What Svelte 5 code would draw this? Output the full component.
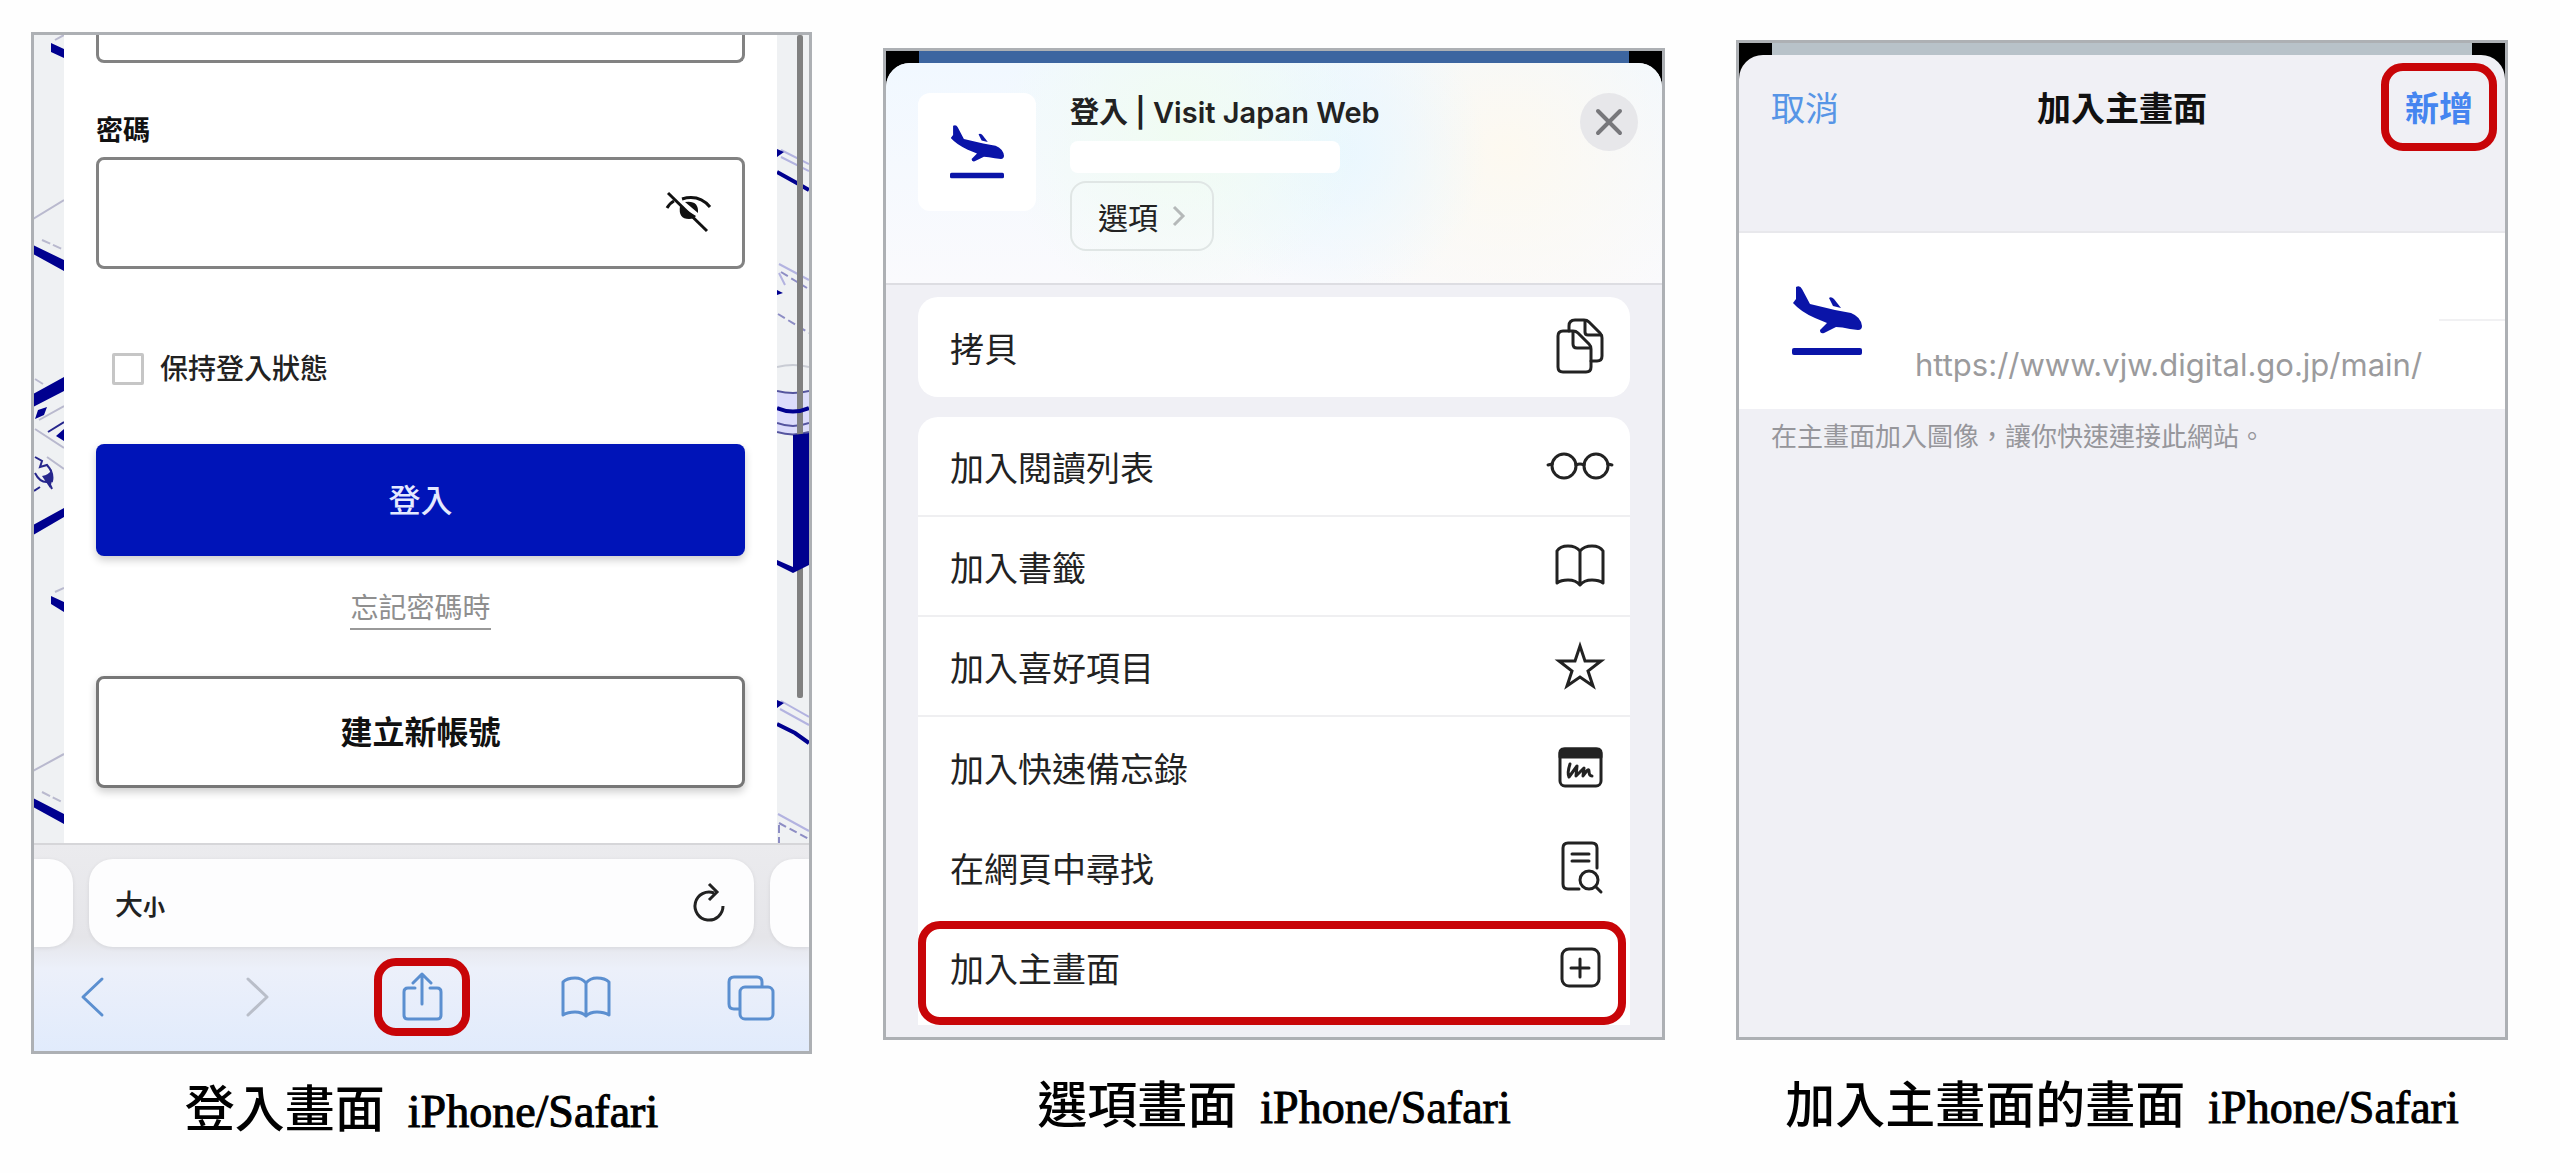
<script>
  let password = $state('');
  let email = $state('');
  let keepLogin = $state(false);

  const actions = [
    { label: '加入閱讀列表', icon: 'glasses', line: true },
    { label: '加入書籤', icon: 'book', line: true },
    { label: '加入喜好項目', icon: 'star', line: true },
    { label: '加入快速備忘錄', icon: 'note' },
    { label: '在網頁中尋找', icon: 'find' },
    { label: '加入主畫面', icon: 'plus', marked: true }
  ];
</script>

{#snippet plane(size)}
  <svg width={size} height={size} viewBox="0 0 70 70" fill="#0a14a8" aria-hidden="true">
    <path d="M4 1 Q8 -1 10 3 L18 18 L43 24 L59 27 Q69 31 70 40 Q70 44 66 44 L58 43 Q50 41 44 41 L32 47 Q28 48 28 44 L35 37 L23 32 Q9 26 1 17 L4 13 Z" />
    <path d="M37 12 Q39 10 42 13 L49 22 L41 20 Z" />
    <rect x="0" y="62" width="70" height="7" rx="2" />
  </svg>
{/snippet}

{#snippet icon(name)}
  <svg class="icon" width="68" height="60" viewBox="0 0 68 60" fill="none" stroke="currentColor" stroke-width="3" stroke-linejoin="round" stroke-linecap="round" aria-hidden="true">
    {#if name === 'copy'}
      <path d="M23 14 V9 Q23 3 29 3 H38 Q41 3 43 5 L54 16 Q56 18 56 21 V39 Q56 44 51 44 H45" />
      <path d="M39 4 V15 Q39 18 42 18 H55" />
      <path d="M17 14 H27 Q30 14 32 16 L43 27 Q45 29 45 32 V50 Q45 55 40 55 H17 Q12 55 12 50 V19 Q12 14 17 14 Z" />
      <path d="M27 15 V27 Q27 31 31 31 H44" />
    {:else if name === 'glasses'}
      <circle cx="18" cy="30" r="12" />
      <circle cx="50" cy="30" r="12" />
      <path d="M30 29 Q34 27 38 29 M2 29 L6 28 M62 28 L66 29" />
    {:else if name === 'book'}
      <path d="M34 15 Q30 10 22 10 Q14 10 11 15 V47 Q15 44 22 44 Q30 44 34 49 Q38 44 46 44 Q53 44 57 47 V15 Q54 10 46 10 Q38 10 34 15 Z M34 15 V48" />
    {:else if name === 'star'}
      <path stroke-linejoin="miter" d="M34 10 L39 25 H55 L42 35 L47 50 L34 41 L21 50 L26 35 L13 25 H29 Z" />
    {:else if name === 'note'}
      <rect x="14" y="12" width="41" height="37" rx="5" />
      <path fill="currentColor" d="M14 20 V16 Q14 12 18 12 H51 Q55 12 55 16 V20 Z" />
      <path d="M24 27 Q21 36 23 40 L31 29 L30 39 L38 31 L37 39 Q43 30 43 34 Q43 39 46 39" />
    {:else if name === 'find'}
      <path d="M33 52 H22 Q17 52 17 47 V11 Q17 6 22 6 H46 Q51 6 51 11 V31" />
      <path d="M26 17 H43 M26 24 H43" />
      <circle cx="43" cy="43" r="9" />
      <path d="M50 50 L55 55" />
    {:else if name === 'plus'}
      <rect x="16" y="12" width="37" height="37" rx="7" />
      <path d="M34 22 V40 M25 31 H43" />
    {/if}
  </svg>
{/snippet}

<main>
  <figure class="login">
    <div class="screen">
      <div class="web">
        <svg class="art" width="30" height="808" viewBox="0 0 30 808" fill="#00008f" aria-hidden="true">
          <path d="M17 8 L30 14 V23 L17 17 Z M-1 210 L30 225 V236 L-1 219 Z M30 342 L-1 359 V372 L30 356 Z" />
          <path d="M22 401 L30 394 V406 Z M1 384 L4 375 L13 372 L10 380 Z M30 473 L-1 490 V500 L30 482 Z" />
          <path d="M17 561 L30 567 V577 L17 569 Z M-1 763 L30 779 V789 L-1 772 Z" />
          <g fill="none" stroke="#b9b9ce" stroke-width="2">
            <path d="M21 5 L30 0 M-1 184 L30 165 M1 344 L9 349 M5 385 L30 371 M1 394 L30 413 M13 422 L30 434 M21 557 L30 553 M-1 736 L30 719" />
            <path stroke-dasharray="9 3" d="M8 205 L28 214 M8 757 L28 767" />
          </g>
          <path fill="none" stroke="#26268c" stroke-width="2" d="M14 397 L30 387 M1 422 L8 426 L6 432 L13 430 Q20 438 18 446 L13 443 L18 454 M1 438 Q6 448 14 447 M0 456 L6 452" />
          <path fill="#26268c" d="M8 441 Q15 440 18 434 V446 L16 453 L12 447 Z" />
        </svg>
        <form class="form" onsubmit={(e) => e.preventDefault()}>
          <input class="field cut" type="email" aria-label="電子郵件" bind:value={email} />
          <label class="label" for="password">密碼</label>
          <div class="password">
            <input class="field" id="password" type="password" bind:value={password} />
            <button class="eye" type="button" aria-label="顯示密碼">
              <svg width="48" height="42" viewBox="0 0 48 42" fill="none" stroke="#111" stroke-width="3">
                <path d="M2 17 Q5 12 9 10 M17 8 Q34 3 45 16" />
                <path fill="#111" stroke="none" d="M15 15 Q13 28 24 28 Q29 28 31 25 Z M20 11 Q34 9 33 22 Z" />
                <path d="M3 2 L42 40" />
              </svg>
            </button>
          </div>
          <label class="keep">
            <input type="checkbox" bind:checked={keepLogin} />
            保持登入狀態
          </label>
          <button class="primary" type="submit">登入</button>
          <a class="forgot" href="#forgot">忘記密碼時</a>
          <button class="secondary" type="button">建立新帳號</button>
        </form>
        <svg class="art" width="32" height="808" viewBox="0 0 32 808" fill="none" aria-hidden="true">
          <path stroke="#b3b3e0" stroke-width="2" d="M4 115 L32 129 M4 122 L32 136 M2 229 L32 245 M2 238 L8 250 M4 666 L32 682 M3 674 L32 690 M1 779 L32 796" />
          <path stroke="#8d8dc4" stroke-width="2" stroke-dasharray="8 4" d="M4 237 L30 253 M1 279 L32 298 M2 788 L32 804 M2 790 V808" />
          <path fill="#00008f" d="M0 114 L7 117 L0 122 Z M0 255 L6 258 L0 260 Z M0 665 L7 668 L0 673 Z" />
          <path stroke="#00008f" stroke-width="4" d="M0 137 L18 147 L32 155 M0 689 L18 698 L32 708" />
          <path stroke="#c9ccd4" stroke-width="2" d="M0 332 Q16 328 32 332" />
          <path fill="#dcdcfb" d="M0 357 Q16 361 32 357 V396 Q16 402 0 396 Z" />
          <path stroke="#55559f" stroke-width="2" d="M0 356 Q16 360 32 356 M0 388 Q16 394 32 388 M0 397 Q16 402 32 397" />
          <rect x="20" y="0" width="6" height="663" rx="2" fill="#808080" />
          <path stroke="#00008f" stroke-width="4" d="M0 373 Q16 380 32 373" />
          <path fill="#00008f" d="M16 400 L32 398 V530 L16 538 L0 530 V525 L16 532 Z" />
        </svg>
      </div>
      <div class="toolbar">
        <div class="tabs">
          <div class="tab stub"></div>
          <div class="tab address">
            <button type="button">大<small>小</small></button>
            <button type="button" aria-label="重新載入">
              <svg width="34" height="42" viewBox="0 0 34 42" fill="none" stroke="#222" stroke-width="3">
                <path d="M31 24 A14 14 0 1 1 22 11 M17 2 L25 10 L17 18" />
              </svg>
            </button>
          </div>
          <div class="tab stub right"></div>
        </div>
        <nav class="nav">
          <button type="button" aria-label="返回"><svg width="52" height="52" viewBox="0 0 52 52"><path d="M36 8 L17 26 L36 44" /></svg></button>
          <button type="button" class="off" aria-label="前進"><svg width="52" height="52" viewBox="0 0 52 52"><path d="M17 8 L36 26 L17 44" /></svg></button>
          <button type="button" class="marked share" aria-label="分享">
            <svg width="52" height="52" viewBox="0 0 52 52"><path d="M19 17 H12 Q8 17 8 21 V44 Q8 48 12 48 H41 Q45 48 45 44 V21 Q45 17 41 17 H34 M26 33 V3 M17 12 L26 3 L35 12" /></svg>
          </button>
          <button type="button" aria-label="書籤"><svg width="52" height="52" viewBox="0 0 52 52"><path d="M26 12 Q22 7 15 7 Q7 7 3 11 V44 Q8 41 15 41 Q22 41 26 45 Q30 41 37 41 Q44 41 49 44 V11 Q45 7 37 7 Q30 7 26 12 Z M26 12 V45" /></svg></button>
          <button type="button" aria-label="分頁"><svg width="52" height="52" viewBox="0 0 52 52"><path d="M14 38 H9 Q4 38 4 33 V11 Q4 6 9 6 H32 Q37 6 37 11 V15" /><rect x="15" y="16" width="33" height="32" rx="5" /></svg></button>
        </nav>
      </div>
    </div>
    <figcaption><span>登入畫面</span>&nbsp; iPhone/Safari</figcaption>
  </figure>

  <figure class="options">
    <div class="screen dark">
      <div class="peek blue"></div>
      <div class="sheet">
        <header class="site">
          <div class="tile">{@render plane(54)}</div>
          <div class="site-info">
            <h2>登入 | Visit Japan Web</h2>
            <div class="blank"></div>
            <button class="pill" type="button">
              選項
              <svg width="14" height="22" viewBox="0 0 14 22" fill="none" stroke="#b5b9b9" stroke-width="3"><path d="M2 2 L11 11 L2 20" /></svg>
            </button>
          </div>
          <button class="close" type="button" aria-label="關閉">
            <svg width="28" height="28" viewBox="0 0 28 28" fill="none" stroke="#77777b" stroke-width="4" stroke-linecap="round"><path d="M3 3 L25 25 M25 3 L3 25" /></svg>
          </button>
        </header>
        <div class="lists">
          <div class="list single">
            <button class="row" type="button">拷貝 {@render icon('copy')}</button>
          </div>
          <div class="list">
            {#each actions as action}
              <button class="row" type="button" class:line={action.line} class:marked={action.marked}>
                {action.label}
                {@render icon(action.icon)}
              </button>
            {/each}
          </div>
        </div>
      </div>
    </div>
    <figcaption><span>選項畫面</span>&nbsp; iPhone/Safari</figcaption>
  </figure>

  <figure class="add">
    <div class="screen dark">
      <div class="peek gray"></div>
      <div class="sheet">
        <header class="bar">
          <button type="button">取消</button>
          <h2>加入主畫面</h2>
          <button type="button" class="marked confirm">新增</button>
        </header>
        <div class="bookmark">
          <div class="logo">{@render plane(70)}</div>
          <div class="details">
            <div class="name"></div>
            <div class="url">https://www.vjw.digital.go.jp/main/</div>
          </div>
        </div>
        <p class="hint">在主畫面加入圖像，讓你快速連接此網站。</p>
      </div>
    </div>
    <figcaption><span>加入主畫面的畫面</span>&nbsp; iPhone/Safari</figcaption>
  </figure>
</main>

<style>
  :global(body) {
    margin: 0;
    background: #fefefe;
  }

  main {
    display: grid;
    grid-template-columns: 781fr 782fr 772fr;
    column-gap: 71px;
    padding: 32px 52px 24px 31px;
    font-family: Inter, "Noto Sans CJK TC", sans-serif;
    color: #222;
  }

  main * {
    box-sizing: border-box;
  }

  figure {
    display: flex;
    flex-direction: column;
    margin: 0;
  }

  .options {
    padding: 16px 0 4px;
  }

  .add {
    padding: 8px 0 4px;
  }

  .screen {
    display: flex;
    flex-direction: column;
    flex: 1;
    border: 3px solid #adb0b4;
    background: #fff;
    overflow: hidden;
  }

  .dark {
    background: #000;
  }

  figcaption {
    margin-top: 34px;
    font-family: "Liberation Serif", "Noto Sans CJK TC", serif;
    font-size: 46px;
    line-height: 64px;
    font-weight: 500;
    text-align: center;
    white-space: nowrap;
    color: #000;
    -webkit-text-stroke: 1px #000;
  }

  figcaption span {
    font-size: 50px;
    -webkit-text-stroke: 0;
  }

  .login figcaption {
    margin-top: 24px;
  }

  button {
    font: inherit;
    color: inherit;
    padding: 0;
    border: 0;
    background: none;
    cursor: pointer;
  }

  svg {
    display: block;
    flex: none;
  }

  h2 {
    margin: 0;
  }

  .marked {
    position: relative;
  }

  .marked::after {
    content: "";
    position: absolute;
    inset: 4px 4px -8px 0;
    border: 8px solid #c80508;
    border-radius: 22px;
  }

  /* login page */
  .web {
    display: flex;
    justify-content: space-between;
    background: #eff1f3;
  }

  .form {
    flex: 1;
    display: flex;
    flex-direction: column;
    padding: 0 32px;
    background: #fff;
  }

  .field {
    width: 100%;
    height: 112px;
    padding: 0 96px 0 24px;
    border: 3px solid #828282;
    border-radius: 8px;
    background: #fff;
    font-size: 28px;
  }

  .cut {
    height: 28px;
    border-top: 0;
    border-radius: 0 0 8px 8px;
  }

  .label {
    margin: 48px 0 6px;
    font-size: 27px;
    line-height: 40px;
    font-weight: 700;
    color: #111;
  }

  .password {
    position: relative;
  }

  .eye {
    position: absolute;
    top: 34px;
    right: 32px;
  }

  .keep {
    display: flex;
    align-items: center;
    gap: 16px;
    margin: 80px 0 55px;
    padding-left: 16px;
    font-size: 28px;
    line-height: 40px;
    font-weight: 500;
  }

  .keep input {
    appearance: none;
    width: 32px;
    height: 32px;
    margin: 0;
    border: 3px solid #c6c6c6;
    border-radius: 2px;
    background: #fff;
  }

  .keep input:checked {
    background: #0014b8;
  }

  .primary,
  .secondary {
    height: 112px;
    padding-bottom: 4px;
    border-radius: 8px;
    font-size: 32px;
    font-weight: 700;
    box-shadow: 0 4px 8px rgba(0, 0, 0, 0.2);
  }

  .primary {
    background: #0014b8;
    color: #e4e9ff;
    font-weight: 500;
  }

  .secondary {
    border: 3px solid #777;
    color: #111;
    background: #fff;
  }

  .forgot {
    align-self: center;
    margin: 32px 0 46px;
    border-bottom: 2px solid #999;
    font-size: 28px;
    line-height: 40px;
    color: #8f8f8f;
    text-decoration: none;
  }

  .toolbar {
    flex: 1;
    display: flex;
    flex-direction: column;
    padding-top: 14px;
    border-top: 2px solid #d6d6d9;
    background: linear-gradient(#ebebee, #e5e5e9 45%, #ecf0fa 60%, #e1ebfc);
  }

  .tabs {
    display: flex;
    gap: 16px;
  }

  .tab {
    height: 88px;
    border-radius: 24px;
    background: #fdfdfe;
    box-shadow: 0 1px 4px rgba(0, 0, 0, 0.08);
  }

  .stub {
    width: 39px;
    border-radius: 0 24px 24px 0;
  }

  .stub.right {
    border-radius: 24px 0 0 24px;
  }

  .address {
    flex: 1;
    display: flex;
    align-items: center;
    justify-content: space-between;
    padding: 0 28px 0 26px;
    font-size: 28px;
    font-weight: 500;
  }

  .address small {
    font-size: 22px;
    font-weight: 700;
  }

  .nav {
    flex: 1;
    display: flex;
    align-items: center;
    justify-content: space-between;
    padding: 0 32px 4px;
  }

  .nav svg {
    fill: none;
    stroke: #5b8fd0;
    stroke-width: 3;
    stroke-linejoin: round;
    stroke-linecap: round;
  }

  .nav .off svg {
    stroke: #b9bec9;
  }

  .share::after {
    inset: -13px -22px;
  }

  /* share sheet */
  .peek {
    height: 12px;
    margin: 0 33px;
  }

  .blue {
    background: #3c65a0;
  }

  .gray {
    background: #b8c2c9;
  }

  .sheet {
    flex: 1;
    border-radius: 24px 24px 0 0;
    background: #f0f0f5;
    overflow: hidden;
  }

  .site {
    display: flex;
    align-items: flex-start;
    gap: 34px;
    padding: 30px 24px 32px 32px;
    border-bottom: 2px solid #dddde2;
    background:
      radial-gradient(circle at 38% 30%, #f0fcf2, transparent 36%),
      radial-gradient(circle at 58% 40%, #e9f7ff, transparent 32%),
      radial-gradient(circle at 80% 40%, #fdf9f0, transparent 34%),
      linear-gradient(#f1f8ff, #fafafd);
  }

  .tile {
    display: grid;
    place-items: center;
    width: 118px;
    height: 118px;
    border-radius: 12px;
    background: #fff;
  }

  .site-info {
    flex: 1;
    display: flex;
    flex-direction: column;
    align-items: flex-start;
    gap: 8px;
  }

  .site h2 {
    font-size: 29px;
    line-height: 40px;
    font-weight: 600;
  }

  .blank {
    width: 270px;
    height: 32px;
    border-radius: 8px;
    background: #fff;
  }

  .pill {
    display: flex;
    align-items: center;
    gap: 14px;
    height: 70px;
    padding: 0 26px;
    border: 2px solid #e0e6e5;
    border-radius: 16px;
    font-size: 30px;
  }

  .close {
    display: grid;
    place-items: center;
    width: 58px;
    height: 58px;
    border-radius: 50%;
    background: #e7e7ea;
  }

  .lists {
    display: flex;
    flex-direction: column;
    gap: 20px;
    padding: 12px 32px 12px;
  }

  .list {
    padding-bottom: 8px;
    border-radius: 20px 20px 0 0;
    background: #fff;
  }

  .single {
    padding-bottom: 0;
    border-radius: 20px;
  }

  .row {
    display: flex;
    align-items: center;
    justify-content: space-between;
    width: 100%;
    height: 100px;
    padding: 0 16px 0 32px;
    font-size: 34px;
    text-align: left;
  }

  .line {
    border-bottom: 2px solid #efeff1;
  }

  /* add to home screen */
  .bar {
    display: flex;
    justify-content: space-between;
    padding: 26px 32px 94px;
    border-bottom: 2px solid #e8e8ec;
    font-size: 34px;
    line-height: 56px;
    color: #5795e6;
  }

  .bar h2 {
    font-size: 34px;
    font-weight: 600;
    color: #111;
  }

  .confirm {
    font-weight: 600;
    color: #4585f0;
  }

  .confirm::after {
    inset: -18px -24px -14px;
  }

  .bookmark {
    display: flex;
    gap: 32px;
    padding-left: 32px;
    background: #fff;
  }

  .logo {
    display: grid;
    place-items: center;
    width: 112px;
  }

  .details {
    flex: 1;
    font-size: 31px;
    line-height: 88px;
    color: #9b9b9d;
  }

  .name {
    width: 66px;
    height: 88px;
    margin-left: auto;
    border-bottom: 2px solid #f1f1f3;
  }

  .hint {
    margin: 10px 32px;
    font-size: 26px;
    line-height: 36px;
    color: #96969b;
  }
</style>
